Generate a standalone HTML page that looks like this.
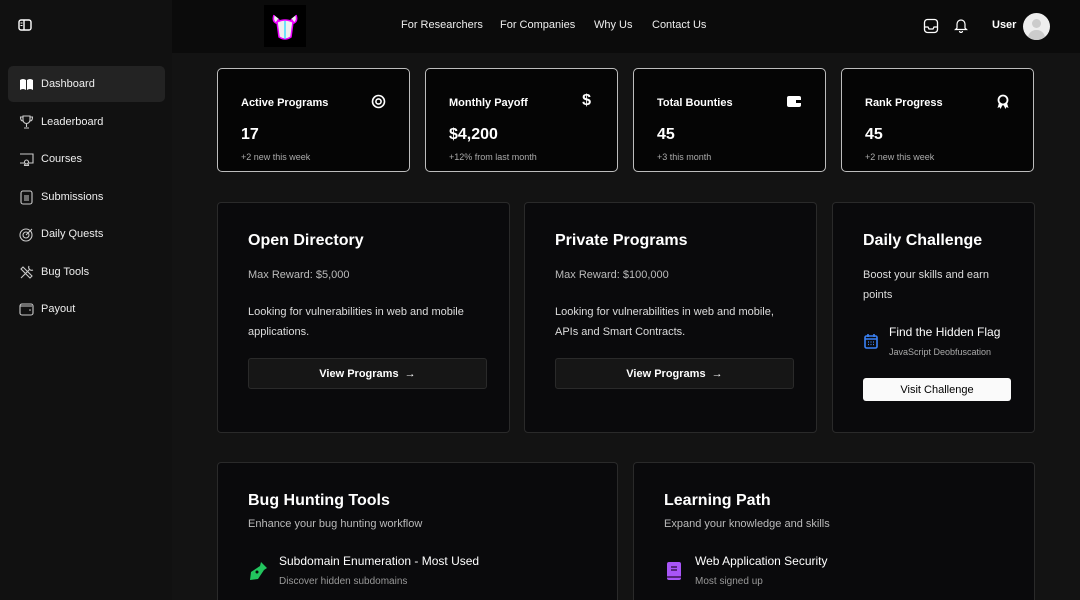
<!DOCTYPE html>
<html><head><meta charset="utf-8"><style>
*{box-sizing:border-box;margin:0;padding:0}
html,body{width:1080px;height:600px;overflow:hidden}
body{background:#131313;font-family:"Liberation Sans",sans-serif;color:#fff;position:relative}
.side{position:absolute;left:0;top:0;width:172px;height:600px;background:#111}
.hdr{position:absolute;left:172px;top:0;width:908px;height:53px;background:#0b0b0b}
.nav a{position:absolute;top:19px;font-size:11px;color:#eee}
.item{position:absolute;left:8px;width:157px;height:36px;border-radius:5px;font-size:11px;display:flex;align-items:center;padding-left:11px;color:#eee}
.item svg{margin-right:7px}
.item.act{background:#232323}
.stat{position:absolute;top:68px;width:193px;height:104px;background:#050505;border:1px solid #bdbdbd;border-radius:5px}
.stat .t{position:absolute;left:23px;top:28px;font-size:11px;font-weight:bold}
.stat .v{position:absolute;left:23px;top:57px;font-size:16px;font-weight:bold}
.stat .s{position:absolute;left:23px;top:83px;font-size:9px;color:#aaa}
.stat svg{position:absolute;right:23px;top:25px}
.card{position:absolute;background:#0a0a0c;border:1px solid #2a2a2a;border-radius:4px}
.card h2{position:absolute;left:30px;top:29px;font-size:16px;font-weight:bold}
.card .p{position:absolute;left:30px;font-size:11px;color:#ddd;line-height:20px}
.btn{position:absolute;left:30px;top:155px;width:239px;height:31px;background:#161616;border:1px solid #2a2a2a;border-radius:3px;font-size:11px;font-weight:bold;display:flex;align-items:center;justify-content:center}
</style></head><body>
<div class="side">
<svg style="position:absolute;left:18px;top:19px" width="14" height="12" viewBox="0 0 14 12"><rect x="1" y="1" width="12" height="10" rx="2" fill="none" stroke="#fff" stroke-width="1.4"/><line x1="6" y1="1" x2="6" y2="11" stroke="#fff" stroke-width="1.4"/><rect x="2.5" y="3.5" width="2" height="1" fill="#fff"/><rect x="2.5" y="6" width="2" height="1" fill="#fff"/></svg>
<div class="item act" style="top:66px"><svg width="15" height="13" viewBox="0 0 15 13"><path d="M1 2 Q4 0 7 2 V12 Q4 10 1 12Z M8 2 Q11 0 14 2 V12 Q11 10 8 12Z" fill="#fff"/></svg>Dashboard</div>
<div class="item" style="top:104px"><svg width="15" height="14" viewBox="0 0 15 14"><path d="M4 1h7v4a3.5 3.5 0 0 1-7 0z M4 2H1.5Q1.5 6 4 6 M11 2h2.5Q13.5 6 11 6 M7.5 9v3 M5 13h5" fill="none" stroke="#ccc" stroke-width="1.1"/></svg>Leaderboard</div>
<div class="item" style="top:141px"><svg width="15" height="14" viewBox="0 0 15 14"><path d="M1 2h13v9h-4 M5 11H1z M7.5 8a2 2 0 1 0 .01 0 M6 11l-.5 2.5h4L9 11" fill="none" stroke="#ccc" stroke-width="1.1"/></svg>Courses</div>
<div class="item" style="top:179px"><svg width="15" height="15" viewBox="0 0 15 15"><rect x="2" y="1" width="11" height="13" rx="2" fill="none" stroke="#ccc" stroke-width="1.1"/><path d="M5 6h5M5 8h5M5 10h5" stroke="#ccc"/></svg>Submissions</div>
<div class="item" style="top:216px"><svg width="15" height="15" viewBox="0 0 15 15"><circle cx="7" cy="8" r="6" fill="none" stroke="#ccc" stroke-width="1.1"/><circle cx="7" cy="8" r="3" fill="none" stroke="#ccc" stroke-width="1.1"/><path d="M7 8l6-6" stroke="#ccc" stroke-width="1.1"/></svg>Daily Quests</div>
<div class="item" style="top:254px"><svg width="15" height="15" viewBox="0 0 15 15"><path d="M2 13l9-9 M4 2l9 9-2 2-9-9z M10 1a3 3 0 0 0 4 4" fill="none" stroke="#ccc" stroke-width="1.1"/></svg>Bug Tools</div>
<div class="item" style="top:291px"><svg width="15" height="14" viewBox="0 0 15 14"><rect x="1" y="2" width="13" height="11" rx="2" fill="none" stroke="#ccc" stroke-width="1.1"/><path d="M1 4h12" stroke="#ccc"/><circle cx="11" cy="8" r=".8" fill="#ccc"/></svg>Payout</div>
</div>
<div class="hdr">
<div style="position:absolute;left:92px;top:5px;width:42px;height:42px;background:#000"><svg width="42" height="42" viewBox="0 0 42 42"><path d="M10 10 Q8 16 12 18 L15 14 M32 10 Q34 16 30 18 L27 14 M13 17 Q21 13 29 17 L27 32 Q21 36 15 32Z" fill="#eee" stroke="#e0f" stroke-width="1.5"/><path d="M21 16v18" stroke="#4df" stroke-width="1.5"/></svg></div>
<div class="nav"><a style="left:229px">For Researchers</a><a style="left:328px">For Companies</a><a style="left:422px">Why Us</a><a style="left:480px">Contact Us</a></div>
<svg style="position:absolute;left:751px;top:18px" width="16" height="16" viewBox="0 0 16 16"><rect x="1.5" y="1.5" width="13" height="13" rx="3" fill="none" stroke="#fff" stroke-width="1.3"/><path d="M1.5 9h3.5l1 2h4l1-2h3.5" fill="none" stroke="#fff" stroke-width="1.3"/></svg>
<svg style="position:absolute;left:782px;top:17px" width="14" height="16" viewBox="0 0 14 16"><path d="M3 11V7a4 4 0 0 1 8 0v4l1.5 1.5h-11z M5.5 14a1.5 1.5 0 0 0 3 0" fill="none" stroke="#fff" stroke-width="1.2"/></svg>
<div style="position:absolute;left:820px;top:19px;font-size:11px;font-weight:bold">User</div>
<div style="position:absolute;left:851px;top:13px;width:27px;height:27px;border-radius:50%;background:#eee;overflow:hidden"><div style="position:absolute;left:9px;top:6px;width:9px;height:9px;border-radius:50%;background:#ccc"></div><div style="position:absolute;left:5px;top:17px;width:17px;height:10px;border-radius:8px 8px 0 0;background:#ccc"></div></div>
</div>

<div class="stat" style="left:217px"><div class="t">Active Programs</div><svg width="15" height="15" viewBox="0 0 15 15"><circle cx="7.5" cy="7.5" r="6" fill="none" stroke="#fff" stroke-width="1.6"/><circle cx="7.5" cy="7.5" r="2.6" fill="none" stroke="#fff" stroke-width="1.6"/></svg><div class="v">17</div><div class="s">+2 new this week</div></div>
<div class="stat" style="left:425px"><div class="t">Monthly Payoff</div><div style="position:absolute;right:26px;top:23px;font-size:16px;font-weight:bold">$</div><div class="v">$4,200</div><div class="s">+12% from last month</div></div>
<div class="stat" style="left:633px"><div class="t">Total Bounties</div><svg width="16" height="14" viewBox="0 0 16 14"><rect x="1" y="2" width="14" height="11" rx="2" fill="#fff"/><rect x="10" y="6" width="5" height="3" fill="#000"/></svg><div class="v">45</div><div class="s">+3 this month</div></div>
<div class="stat" style="left:841px"><div class="t">Rank Progress</div><svg width="14" height="16" viewBox="0 0 14 16"><circle cx="7" cy="6" r="4.5" fill="none" stroke="#fff" stroke-width="1.8"/><path d="M3 9l-1.5 5 2-1 1 2 2-4 M11 9l1.5 5-2-1-1 2-2-4" fill="#fff"/></svg><div class="v">45</div><div class="s">+2 new this week</div></div>

<div class="card" style="left:217px;top:202px;width:293px;height:231px"><h2>Open Directory</h2><div class="p" style="top:62px;color:#bbb">Max Reward: $5,000</div><div class="p" style="top:99px">Looking for vulnerabilities in web and mobile<br>applications.</div><div class="btn">View Programs&nbsp;&nbsp;→</div></div>
<div class="card" style="left:524px;top:202px;width:293px;height:231px"><h2>Private Programs</h2><div class="p" style="top:62px;color:#bbb">Max Reward: $100,000</div><div class="p" style="top:99px">Looking for vulnerabilities in web and mobile,<br>APIs and Smart Contracts.</div><div class="btn">View Programs&nbsp;&nbsp;→</div></div>
<div class="card" style="left:832px;top:202px;width:203px;height:231px"><h2>Daily Challenge</h2><div class="p" style="top:62px">Boost your skills and earn<br>points</div>
<svg style="position:absolute;left:31px;top:130px" width="14" height="16" viewBox="0 0 14 16"><rect x="1" y="3" width="12" height="12" rx="1.5" fill="none" stroke="#3b82f6" stroke-width="1.6"/><path d="M4 1v3M10 1v3M1 6h12" stroke="#3b82f6" stroke-width="1.6"/><path d="M4 9h1M6.5 9h1M9 9h1M4 11.5h1M6.5 11.5h1M9 11.5h1" stroke="#3b82f6" stroke-width="1.2"/></svg>
<div style="position:absolute;left:56px;top:122px;font-size:12px">Find the Hidden Flag</div><div style="position:absolute;left:56px;top:144px;font-size:9px;color:#aaa">JavaScript Deobfuscation</div>
<div style="position:absolute;left:30px;top:175px;width:148px;height:23px;background:#fafafa;border-radius:3px;color:#000;font-size:11px;display:flex;align-items:center;justify-content:center">Visit Challenge</div></div>

<div class="card" style="left:217px;top:462px;width:401px;height:138px;border-bottom:none;border-radius:4px 4px 0 0"><h2>Bug Hunting Tools</h2><div class="p" style="top:51px;color:#bbb">Enhance your bug hunting workflow</div>
<svg style="position:absolute;left:30px;top:98px" width="20" height="20" viewBox="0 0 20 20"><path d="M13 1l6 6-3 2-6 9-8 1 1-8 9-6z" fill="#22c55e"/><circle cx="9" cy="11" r="1.5" fill="#0a0a0c"/></svg>
<div style="position:absolute;left:61px;top:91px;font-size:12px">Subdomain Enumeration - Most Used</div><div style="position:absolute;left:61px;top:113px;font-size:10px;color:#999">Discover hidden subdomains</div></div>
<div class="card" style="left:633px;top:462px;width:402px;height:138px;border-bottom:none;border-radius:4px 4px 0 0"><h2>Learning Path</h2><div class="p" style="top:51px;color:#bbb">Expand your knowledge and skills</div>
<svg style="position:absolute;left:32px;top:98px" width="16" height="20" viewBox="0 0 16 20"><rect x="1" y="1" width="14" height="18" rx="2" fill="#a855f7"/><path d="M5 6h6M5 9h6" stroke="#2a0a3a" stroke-width="1.3"/><path d="M1 16h14" stroke="#2a0a3a" stroke-width="1.3"/></svg>
<div style="position:absolute;left:61px;top:91px;font-size:12px">Web Application Security</div><div style="position:absolute;left:61px;top:113px;font-size:10px;color:#999">Most signed up</div></div>
</body></html>
